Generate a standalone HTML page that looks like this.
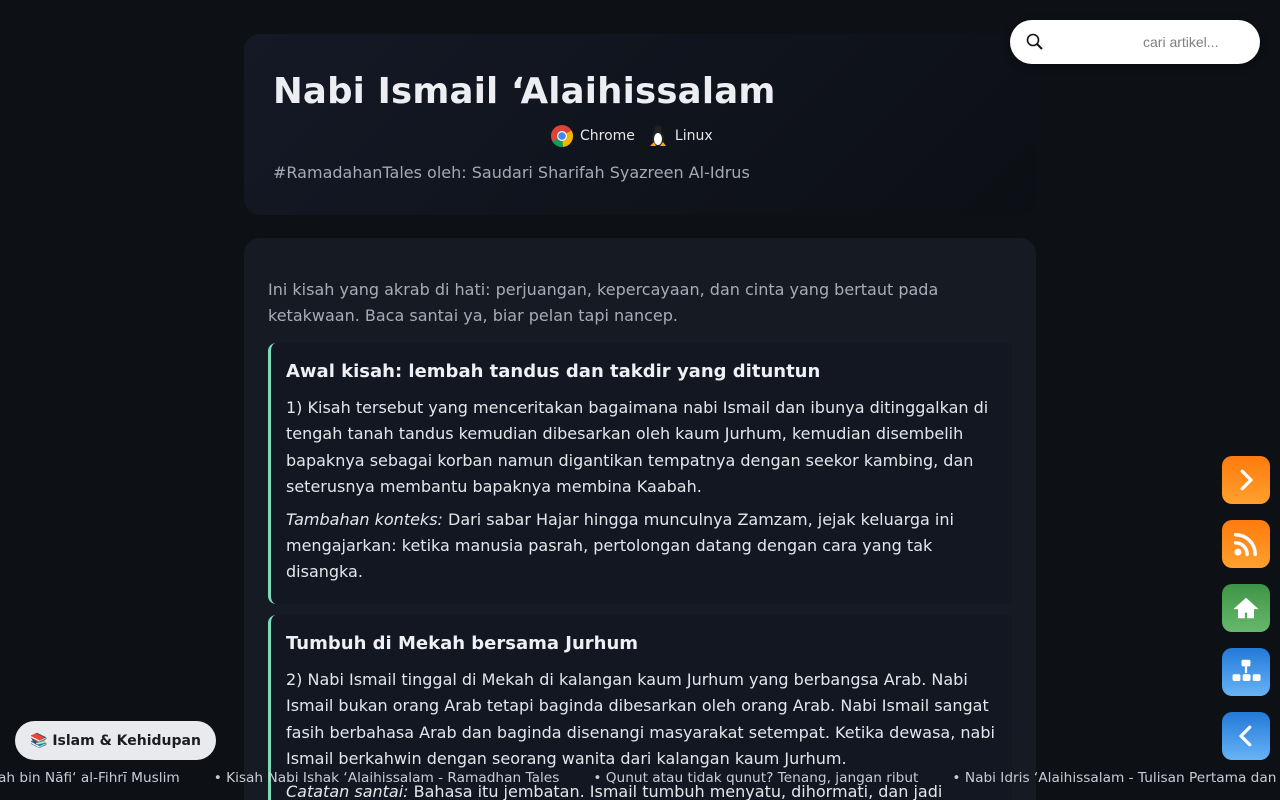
<!DOCTYPE html>
<html style="width:1280px;height:800px;overflow:hidden"><head><meta charset="utf-8"><style>
*{box-sizing:border-box;margin:0;padding:0}
body{width:1280px;height:800px;overflow:hidden;background:#0d1015;font-family:"DejaVu Sans","Liberation Sans",sans-serif;color:#e6e8ec;position:relative}
.card{position:absolute;left:244px;width:792px;border-radius:16px;background:linear-gradient(135deg,#141926,#0c0f14)}
.hdr{top:34px;height:181px}
.hdr h1{position:absolute;left:29px;top:37px;font-size:35.5px;font-weight:bold;color:#eceef2;letter-spacing:0.2px}
.badges{position:absolute;left:306px;top:90px;font-size:14px;color:#e6e6e6;display:flex;align-items:center}
.hdr .sub{position:absolute;left:29px;top:129px;font-size:16px;color:#a3a9b5;line-height:20px}
.art{top:238px;height:562px;background:#151a23;border-radius:16px 16px 0 0;overflow:hidden}
.intro{position:absolute;left:24px;top:39px;width:740px;font-size:16px;line-height:26px;color:#a7adb8}
.sec{position:absolute;left:24px;width:744px;border-left:3px solid #7fd8b8;border-radius:8px 0 0 8px;background:#131722;padding:18px 15px}
.sec h2{font-size:18px;font-weight:bold;color:#eef0f3;margin-bottom:13px}
.sec p{font-size:16px;line-height:26.4px;color:#e3e6ea;margin-bottom:6px}
.search{position:absolute;left:1010px;top:20px;width:250px;height:44px;border-radius:22px;background:#fff;box-shadow:0 2px 8px rgba(0,0,0,.4)}
.search span{position:absolute;left:133px;top:14px;font-family:"Liberation Sans",sans-serif;font-size:14px;color:#808080}
.fab{position:absolute;left:1222px;width:48px;height:48px;border-radius:10px;display:flex;align-items:center;justify-content:center}
.o{background:linear-gradient(#ff7a0e,#ffa12e)}.g{background:linear-gradient(#3e9446,#66b96c)}.b{background:linear-gradient(#2379d8,#67b3f5)}
.pill{position:absolute;left:15px;top:721px;width:201px;height:39px;border-radius:20px;background:#e8eaed;color:#1a1d22;font-weight:bold;font-size:14px;display:flex;align-items:center;justify-content:center}
.ticker{position:absolute;left:-2px;top:770px;font-size:13.7px;color:#c9ccd2;white-space:nowrap}
.ticker span{margin-right:34px}
</style></head><body>
<div class="card hdr">
<h1>Nabi Ismail ‘Alaihissalam</h1>
<div class="badges">
<svg width="24" height="24" viewBox="0 0 24 24"><circle cx="12" cy="12" r="11" fill="#db4437"/><path d="M12 12 L2.5 17.5 A11 11 0 0 0 13 23 Z" fill="#0f9d58"/><path d="M12 12 L13 23 A11 11 0 0 0 21.5 6.5 Z" fill="#f4b400"/><circle cx="12" cy="12" r="5" fill="#fff"/><circle cx="12" cy="12" r="3.8" fill="#4285f4"/></svg>
<span style="margin:0 12px 0 6px">Chrome</span>
<svg width="22" height="24" viewBox="0 0 22 24"><ellipse cx="11" cy="14" rx="6" ry="8" fill="#222"/><ellipse cx="11" cy="15" rx="4" ry="6" fill="#fff"/><circle cx="11" cy="5" r="3.5" fill="#222"/><path d="M3 22h6l-2-4zM13 22h6l-3-4z" fill="#f5b000"/></svg>
<span style="margin-left:6px">Linux</span>
</div>
<div class="sub">#RamadahanTales oleh: Saudari Sharifah Syazreen Al-Idrus</div>
</div>
<div class="card art">
<div class="intro">Ini kisah yang akrab di hati: perjuangan, kepercayaan, dan cinta yang bertaut pada ketakwaan. Baca santai ya, biar pelan tapi nancep.</div>
<div class="sec" style="top:105px;height:261px">
<h2>Awal kisah: lembah tandus dan takdir yang dituntun</h2>
<p>1) Kisah tersebut yang menceritakan bagaimana nabi Ismail dan ibunya ditinggalkan di tengah tanah tandus kemudian dibesarkan oleh kaum Jurhum, kemudian disembelih bapaknya sebagai korban namun digantikan tempatnya dengan seekor kambing, dan seterusnya membantu bapaknya membina Kaabah.</p>
<p><i>Tambahan konteks:</i> Dari sabar Hajar hingga munculnya Zamzam, jejak keluarga ini mengajarkan: ketika manusia pasrah, pertolongan datang dengan cara yang tak disangka.</p>
</div>
<div class="sec" style="top:377px;height:300px">
<h2>Tumbuh di Mekah bersama Jurhum</h2>
<p>2) Nabi Ismail tinggal di Mekah di kalangan kaum Jurhum yang berbangsa Arab. Nabi Ismail bukan orang Arab tetapi baginda dibesarkan oleh orang Arab. Nabi Ismail sangat fasih berbahasa Arab dan baginda disenangi masyarakat setempat. Ketika dewasa, nabi Ismail berkahwin dengan seorang wanita dari kalangan kaum Jurhum.</p>
<p><i>Catatan santai:</i> Bahasa itu jembatan. Ismail tumbuh menyatu, dihormati, dan jadi</p>
</div>
</div>
<div class="search"><svg style="position:absolute;left:16px;top:13px" width="18" height="18" viewBox="0 0 18 18"><circle cx="7" cy="7" r="5.5" fill="none" stroke="#111" stroke-width="1.6"/><path d="M11 11l5 5" stroke="#111" stroke-width="2"/></svg><span>cari artikel...</span></div>
<div class="fab o" style="top:456px"><svg width="30" height="30" viewBox="0 0 24 24"><path d="M9 5l7 7-7 7" fill="none" stroke="#fff" stroke-width="2.6" stroke-linecap="round" stroke-linejoin="round"/></svg></div>
<div class="fab o" style="top:520px"><svg width="30" height="30" viewBox="0 0 26 26"><circle cx="6" cy="20" r="3" fill="#fff"/><path d="M4 12a10 10 0 0 1 10 10M4 5a17 17 0 0 1 17 17" fill="none" stroke="#fff" stroke-width="3" stroke-linecap="round"/></svg></div>
<div class="fab g" style="top:584px"><svg width="32" height="28" viewBox="0 0 28 24"><path d="M14 3L3 13h4v8h6v-5h2v5h6v-8h4z" fill="#fff"/></svg></div>
<div class="fab b" style="top:648px"><svg width="38" height="32" viewBox="0 0 34 28"><rect x="13" y="3" width="8" height="6" rx="1.5" fill="#fff"/><path d="M17 9v6" stroke="#fff" stroke-width="2"/><rect x="5" y="16" width="7" height="6" rx="1.5" fill="#fff"/><rect x="14" y="16" width="7" height="6" rx="1.5" fill="#fff"/><rect x="23" y="16" width="7" height="6" rx="1.5" fill="#fff"/></svg></div>
<div class="fab b" style="top:712px"><svg width="30" height="30" viewBox="0 0 24 24"><path d="M15 5l-7 7 7 7" fill="none" stroke="#fff" stroke-width="2.6" stroke-linecap="round" stroke-linejoin="round"/></svg></div>
<div class="pill">📚 Islam &amp; Kehidupan</div>
<div class="ticker"><span>ah bin Nāfi‘ al-Fihrī Muslim</span><span>• Kisah Nabi Ishak ‘Alaihissalam - Ramadhan Tales</span><span>• Qunut atau tidak qunut? Tenang, jangan ribut</span><span>• Nabi Idris ‘Alaihissalam - Tulisan Pertama dan</span></div>
</body></html>
